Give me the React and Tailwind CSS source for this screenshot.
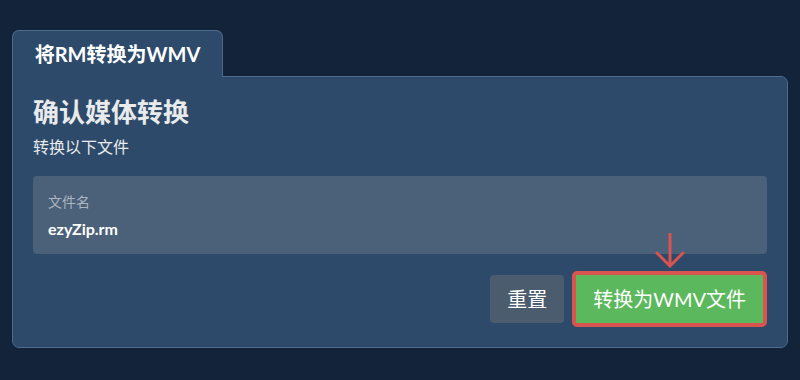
import React from "react";

export default function App() {
  return (
    <div className="min-h-[380px] w-[800px] bg-[#12233a] px-3 pt-[30px] pb-[32px] font-['Lato','Noto_Sans_CJK_SC',sans-serif]">
      {/* 标签页 */}
      <div className="relative z-10 -mb-px flex h-[47px] w-[211px] items-center justify-center rounded-t-[7px] border border-b-0 border-[#4f6a8a] bg-[#2d4a6a]">
        <span className="text-[20px] font-bold leading-none text-white">将RM转换为WMV</span>
      </div>

      {/* 面板 */}
      <div className="rounded-b-[7px] rounded-tr-[7px] border border-[#4f6a8a] bg-[#2d4a6a] px-5 pt-[18px] pb-5">
        <h1 className="text-[26px] font-bold leading-[34px] text-[#e8eaec]">确认媒体转换</h1>
        <p className="mt-[6px] text-[16px] leading-6 text-[#e8eaec]">转换以下文件</p>

        <div className="mt-[17px] h-[78px] rounded-[4px] bg-[#4b6179] px-[15px] pt-[16px]">
          <div className="text-[14px] leading-5 text-[#aab5c1]">文件名</div>
          <div className="mt-[5px] text-[16px] font-bold leading-6 text-white">ezyZip.rm</div>
        </div>

        <div className="mt-[17px] flex items-center justify-end gap-2">
          <button className="h-[48px] rounded-[4px] bg-[#4b5c6e] px-[17px] text-[20px] leading-none text-white">
            重置
          </button>
          <div className="relative">
            <svg
              className="absolute left-1/2 top-[-38px] -translate-x-1/2"
              width="30"
              height="36"
              viewBox="0 0 30 36"
              fill="none"
              stroke="#d9534f"
              strokeWidth="3"
              strokeLinecap="round"
              strokeLinejoin="round"
            >
              <line x1="15" y1="1" x2="15" y2="33" />
              <polyline points="2,20 15,33 28,20" />
            </svg>
            <button className="h-[56px] rounded-[5px] border-4 border-[#d9534f] bg-[#5cb85c] px-[17px] text-[20px] leading-none text-white">
              转换为WMV文件
            </button>
          </div>
        </div>
      </div>
    </div>
  );
}
